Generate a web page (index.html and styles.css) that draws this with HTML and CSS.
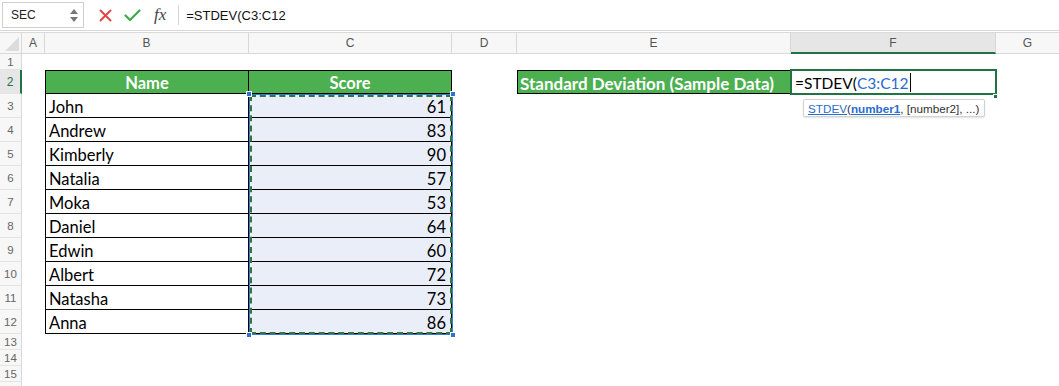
FILE: index.html
```html
<!DOCTYPE html>
<html>
<head>
<meta charset="utf-8">
<link rel="stylesheet" href="styles.css">
</head>
<body>
<div class="app">
  <div class="fbar">
    <div class="namebox">
      <span class="nb-text">SEC</span>
      <span class="spin"><span class="up"></span><span class="down"></span></span>
    </div>
    <div class="fbtns">
      <svg class="ic-x" width="13" height="13" viewBox="0 0 13 13"><path d="M1.5 1.5 L11.5 11.5 M11.5 1.5 L1.5 11.5" stroke="#e2454a" stroke-width="2" stroke-linecap="round"/></svg>
      <svg class="ic-ok" width="17" height="13" viewBox="0 0 17 13"><path d="M1.5 6.5 L6 11 L15.5 1.5" fill="none" stroke="#3aaa4c" stroke-width="2.2" stroke-linecap="round" stroke-linejoin="round"/></svg>
      <span class="fx">fx</span>
    </div>
    <div class="fsep"></div>
    <div class="ftext">=STDEV(C3:C12</div>
  </div>

  <div class="sheet">
    <div class="corner"><span class="tri"></span></div>
    <div class="ch">A</div>
    <div class="ch">B</div>
    <div class="ch">C</div>
    <div class="ch">D</div>
    <div class="ch">E</div>
    <div class="ch ch-active">F</div>
    <div class="ch ch-last">G</div>

    <div class="rh r1">1</div>
    <div class="rh r2 rh-active">2</div>
    <div class="rh r3">3</div>
    <div class="rh r4">4</div>
    <div class="rh r5">5</div>
    <div class="rh r6">6</div>
    <div class="rh r7">7</div>
    <div class="rh r8">8</div>
    <div class="rh r9">9</div>
    <div class="rh r10">10</div>
    <div class="rh r11">11</div>
    <div class="rh r12">12</div>
    <div class="rh r13">13</div>
    <div class="rh r14">14</div>
    <div class="rh r15">15</div>
    <div class="rh r16"></div>

    <div class="c thead cb r2">Name</div>
    <div class="c thead cc r2">Score</div>

    <div class="c name cb r3">John</div><div class="c num cc r3">61</div>
    <div class="c name cb r4">Andrew</div><div class="c num cc r4">83</div>
    <div class="c name cb r5">Kimberly</div><div class="c num cc r5">90</div>
    <div class="c name cb r6">Natalia</div><div class="c num cc r6">57</div>
    <div class="c name cb r7">Moka</div><div class="c num cc r7">53</div>
    <div class="c name cb r8">Daniel</div><div class="c num cc r8">64</div>
    <div class="c name cb r9">Edwin</div><div class="c num cc r9">60</div>
    <div class="c name cb r10">Albert</div><div class="c num cc r10">72</div>
    <div class="c name cb r11">Natasha</div><div class="c num cc r11">73</div>
    <div class="c name cb r12">Anna</div><div class="c num cc r12">86</div>

    <div class="c label ce r2">Standard Deviation (Sample Data)</div>
    <div class="c active cf r2"><span>=STDEV(</span><span class="ref">C3:C12</span><span class="caret"></span></div>

    <div class="sel">
      <div class="ants"></div>
      <span class="h h-tl"></span><span class="h h-tr"></span>
      <span class="h h-bl"></span><span class="h h-br"></span>
    </div>
    <span class="fill-handle"></span>
    <div class="tip"><span class="fn">STDEV</span>(<span class="arg">number1</span>, [number2], ...)</div>
  </div>
</div>
</body>
</html>
```

FILE: styles.css
```css
* { box-sizing: border-box; }
html, body { margin: 0; padding: 0; background: #fff; }
.app { width: 1059px; height: 386px; overflow: hidden; position: relative; }

/* formula bar */
.fbar {
  height: 31px;
  display: flex;
  align-items: center;
  border-bottom: 1px solid #d6d6d6;
  font-family: "Liberation Sans", Arial, sans-serif;
  background: #fff;
}
.namebox {
  margin-left: 2px;
  width: 82px;
  height: 26px;
  border: 1px solid #cfcfcf;
  display: flex;
  align-items: center;
  justify-content: space-between;
  padding: 0 5px 0 8px;
  font-size: 12px;
  color: #222;
}
.spin { display: flex; flex-direction: column; gap: 3px; }
.spin .up { width: 0; height: 0; border-left: 4px solid transparent; border-right: 4px solid transparent; border-bottom: 5px solid #777; }
.spin .down { width: 0; height: 0; border-left: 4px solid transparent; border-right: 4px solid transparent; border-top: 5px solid #777; }
.fbtns { display: flex; align-items: center; margin-left: 15px; }
.ic-x { margin-right: 12px; }
.ic-ok { margin-right: 13px; }
.fx { font-family: "Liberation Serif", "DejaVu Serif", serif; font-style: italic; font-size: 17px; color: #444; }
.fsep { width: 1px; height: 20px; background: #d6d6d6; margin-left: 12px; }
.ftext { margin-left: 7px; font-size: 13px; color: #111; }

/* sheet */
.sheet {
  position: relative;
  margin-top: 1px;
  border-top: 1px solid #dadada;
  display: grid;
  grid-template-columns: 22px 23px 204px 203px 65px 274px 205px 1fr;
  grid-template-rows: 21px 16px 24px repeat(10, 24px) repeat(4, 16px);
  font-family: Lato, "Open Sans", sans-serif;
}
.corner {
  grid-row: 1; grid-column: 1;
  background: #f7f7f7;
  border-right: 1px solid #d8d8d8;
  border-bottom: 1px solid #d8d8d8;
  position: relative;
}
.tri {
  position: absolute; right: 2px; bottom: 2px;
  width: 0; height: 0;
  border-left: 14px solid transparent;
  border-bottom: 14px solid #dcdcdc;
}
.ch {
  grid-row: 1;
  background: #f7f7f7;
  border-right: 1px solid #d8d8d8;
  border-bottom: 1px solid #d8d8d8;
  display: flex; align-items: center; justify-content: center;
  font-family: "Liberation Sans", Arial, sans-serif;
  font-size: 12px; color: #555;
}
.ch-last { border-right: none; }
.ch-active { background: #e6e6e6; border-bottom: 2px solid #217346; }

.rh {
  grid-column: 1;
  background: #f7f7f7;
  border-right: 1px solid #d8d8d8;
  border-bottom: 1px solid #e4e4e4;
  display: flex; align-items: center; justify-content: center;
  font-family: "Liberation Sans", Arial, sans-serif;
  font-size: 11.5px; color: #666;
}
.rh-active { background: #e6e6e6; color: #217346; border-right: 2px solid #217346; font-size: 12px; }

.r1 { grid-row: 2; } .r2 { grid-row: 3; } .r3 { grid-row: 4; } .r4 { grid-row: 5; }
.r5 { grid-row: 6; } .r6 { grid-row: 7; } .r7 { grid-row: 8; } .r8 { grid-row: 9; }
.r9 { grid-row: 10; } .r10 { grid-row: 11; } .r11 { grid-row: 12; } .r12 { grid-row: 13; }
.r13 { grid-row: 14; } .r14 { grid-row: 15; } .r15 { grid-row: 16; } .r16 { grid-row: 17; }

.cb { grid-column: 3; } .cc { grid-column: 4; } .ce { grid-column: 6; } .cf { grid-column: 7; }

.c {
  font-size: 16.5px;
  color: #000;
  display: flex; align-items: center;
  white-space: nowrap;
  padding-top: 2px;
}
.thead {
  background: #4caf50;
  color: #fff;
  font-weight: 700;
  justify-content: center;
  border-top: 1px solid #000;
  border-bottom: 1px solid #000;
  border-right: 1px solid #000;
}
.thead.cb { border-left: 1px solid #000; }
.name { border-left: 1px solid #000; border-right: 1px solid #000; border-bottom: 1px solid #000; padding-left: 3px; }
.num { background: #e9eef8; justify-content: flex-end; padding-right: 5px; border-bottom: 1px solid #000; border-right: 1px solid #000; }
.label {
  background: #4caf50; color: #fff; font-weight: 700;
  border: 1px solid #000; padding-left: 2px;
  font-size: 17px;
}
.active {
  border: 2px solid #217346;
  margin: -1px -1px -1px -1px;
  padding-left: 3px;
  padding-top: 1px;
  font-size: 15.5px;
  position: relative;
  background: #fff;
}
.active .ref { color: #2a6bd0; }
.caret { display: inline-block; width: 1px; height: 19px; background: #000; margin-left: 1px; }

.sel {
  position: absolute;
  left: 249px; top: 61px;
  width: 204px; height: 241px;
  border: 1px solid #3a78d8;
  pointer-events: none;
}
.ants { position: absolute; inset: 0; border: 2px dashed #2e7a3e; }
.h { position: absolute; width: 6px; height: 6px; background: #2f6fd6; border: 1px solid #fff; }
.h-tl { left: -4px; top: -4px; }
.h-tr { right: -4px; top: -4px; }
.h-bl { left: -4px; bottom: -4px; }
.h-br { right: -4px; bottom: -4px; }

.fill-handle { position: absolute; left: 993px; top: 61px; width: 5px; height: 5px; background: #217346; border: 1px solid #fff; }

.tip {
  position: absolute;
  left: 803px; top: 66px;
  height: 18px;
  padding: 0 5px 0 4px;
  background: #fff;
  border: 1px solid #d2d2d2;
  border-radius: 2px;
  box-shadow: 0 1px 2px rgba(0,0,0,0.12);
  font-family: "Liberation Sans", Arial, sans-serif;
  font-size: 11.7px;
  color: #333;
  display: flex; align-items: center;
  white-space: pre;
}
.tip .fn { color: #2a6bd0; text-decoration: underline; }
.tip .arg { color: #2a6bd0; font-weight: 700; text-decoration: underline; }
```
